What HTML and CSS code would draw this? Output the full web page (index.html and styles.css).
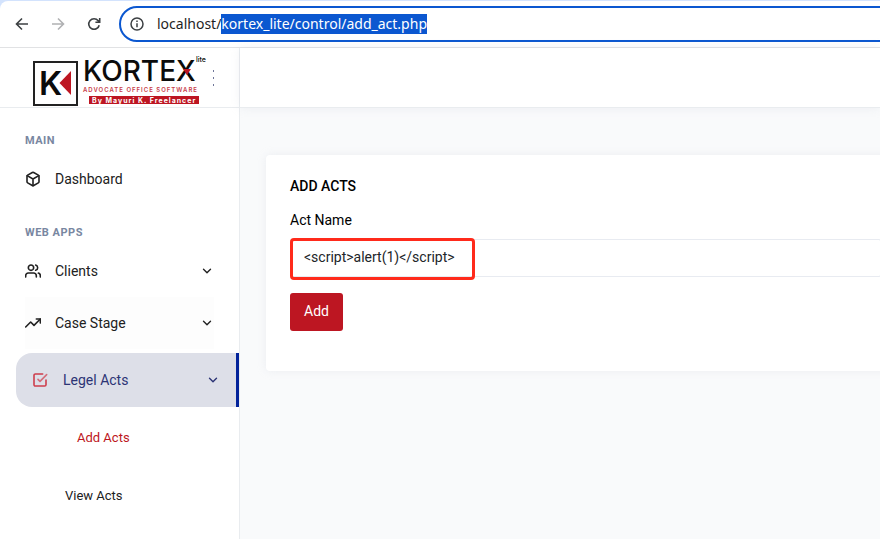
FILE: index.html
```html
<!DOCTYPE html>
<html lang="en">
<head>
<meta charset="utf-8">
<title>Kortex Lite - Add Acts</title>
<link rel="stylesheet" href="styles.css">
</head>
<body>
<div class="browser">
  <button class="tool" type="button" aria-label="Back">
    <svg width="16" height="16" viewBox="0 0 16 16"><path d="M14 8H3M8 2.500 2.500 8 8 13.500"/></svg>
  </button>
  <button class="tool tool-off" type="button" aria-label="Forward" disabled>
    <svg width="16" height="16" viewBox="0 0 16 16"><path d="M2 8h11M8 2.500 13.500 8 8 13.500"/></svg>
  </button>
  <button class="tool" type="button" aria-label="Reload">
    <svg width="16" height="16" viewBox="0 0 16 16"><path d="M13.200 9.200A5.300 5.300 0 1 1 12.200 4.700L13.600 6M13.700 2v4.300H9.400"/></svg>
  </button>
  <div class="address">
    <svg class="info" width="16" height="16" viewBox="0 0 16 16" aria-hidden="true"><circle cx="8" cy="8" r="6"/><path d="M8 7.200v4M8 4.500v1.500"/></svg>
    <input id="url" type="text" aria-label="Address" value="localhost/kortex_lite/control/add_act.php" spellcheck="false">
  </div>
</div>
<div class="app">
  <aside class="sidebar">
    <div class="brand">
      <a class="logo" href="#" aria-label="Kortex Lite">
        <svg width="176" height="52" viewBox="0 0 176 52">
          <rect class="logo-frame" x="1" y="7" width="43" height="43"/>
          <text class="logo-k" x="6" y="40">K</text>
          <path class="logo-red" d="M38 16v24L26.500 28z"/>
          <text class="logo-name" x="50" y="26">KORTEX</text>
          <path class="logo-red" d="M150 14h8l-4 6z"/>
          <text class="logo-lite" x="163" y="7">lite</text>
          <text class="logo-tag" x="50" y="37">ADVOCATE OFFICE SOFTWARE</text>
          <rect class="logo-red" x="56" y="41" width="110" height="8"/>
          <text class="logo-by" x="59" y="48">By Mayuri K. Freelancer</text>
        </svg>
      </a>
      <button class="toggler" type="button" aria-label="Toggle sidebar"><span></span><span></span><span></span></button>
    </div>
    <nav class="menu">
      <h2>Main</h2>
      <a class="item" href="#">
        <svg width="16" height="16" viewBox="0 0 24 24"><path d="M21 16V8a2 2 0 0 0-1-1.730l-7-4a2 2 0 0 0-2 0l-7 4A2 2 0 0 0 3 8v8a2 2 0 0 0 1 1.730l7 4a2 2 0 0 0 2 0l7-4A2 2 0 0 0 21 16z"/><path d="M3.270 6.960 12 12.010l8.730-5.050M12 22.080V12"/></svg>
        <span>Dashboard</span>
      </a>
      <h2>Web Apps</h2>
      <a class="item" href="#">
        <svg width="16" height="16" viewBox="0 0 24 24"><path d="M17 21v-2a4 4 0 0 0-4-4H5a4 4 0 0 0-4 4v2"/><circle cx="9" cy="7" r="4"/><path d="M23 21v-2a4 4 0 0 0-3-3.870M16 3.130a4 4 0 0 1 0 7.750"/></svg>
        <span>Clients</span>
        <svg class="arrow" width="14" height="14" viewBox="0 0 24 24"><path d="m6 9 6 6 6-6"/></svg>
      </a>
      <a class="item item-shaded" href="#">
        <svg width="16" height="16" viewBox="0 0 24 24"><path d="M23 6l-9.500 9.500-5-5L1 18"/><path d="M17 6h6v6"/></svg>
        <span>Case Stage</span>
        <svg class="arrow" width="14" height="14" viewBox="0 0 24 24"><path d="m6 9 6 6 6-6"/></svg>
      </a>
      <a class="item item-open" href="#">
        <svg class="check" width="16" height="16" viewBox="0 0 24 24"><path class="tick" d="m9 11 3 3L22 4"/><path d="M21 12v7a2 2 0 0 1-2 2H5a2 2 0 0 1-2-2V5a2 2 0 0 1 2-2h11"/></svg>
        <span>Legel Acts</span>
        <svg class="arrow" width="14" height="14" viewBox="0 0 24 24"><path d="m6 9 6 6 6-6"/></svg>
      </a>
      <div class="submenu">
        <a class="current" href="#">Add Acts</a>
        <a href="#">View Acts</a>
      </div>
    </nav>
  </aside>
  <div class="page">
    <header class="navbar"></header>
    <main>
      <form class="card">
        <h1>Add Acts</h1>
        <label for="act">Act Name</label>
        <div class="field">
          <input id="act" type="text" value="&lt;script&gt;alert(1)&lt;/script&gt;" spellcheck="false">
          <div class="highlight"></div>
        </div>
        <button class="add" type="button">Add</button>
      </form>
    </main>
  </div>
</div>
<script src="script.js"></script>
</body>
</html>
```
FILE: styles.css
```css
* { box-sizing: border-box; }
html { background: #d3e3fd; }
body {
  margin: 0;
  min-height: 100vh;
  display: flex;
  flex-direction: column;
  overflow: hidden;
  color: #000;
  font: 14px/20px Roboto, sans-serif;
}
a { color: inherit; text-decoration: none; }
button, input { font: inherit; }
svg { flex: none; fill: none; stroke: currentColor; stroke-width: 2; stroke-linecap: round; stroke-linejoin: round; }

.browser {
  display: flex;
  align-items: center;
  height: 47px;
  margin-top: 1px;
  padding-left: 14px;
  gap: 20px;
  background: #fff;
  border-bottom: 1px solid #e1e2e4;
  border-top-left-radius: 8px;
}
.tool { display: flex; padding: 0; border: 0; background: none; color: #3c4043; }
.tool svg { stroke-width: 1.600; stroke-linecap: butt; stroke-linejoin: miter; }
.tool-off { color: #b0b1b3; }
.address {
  display: flex;
  align-items: center;
  gap: 12px;
  flex: 1;
  height: 36px;
  margin: 0 -24px 0 -3px;
  padding-left: 8px;
  border: 2px solid #0b57d0;
  border-radius: 18px;
}
.info { color: #3c4043; stroke-width: 1.500; stroke-linecap: butt; }
.address input {
  flex: 1;
  height: 20px;
  padding: 0;
  border: 0;
  outline: 0;
  background: none;
  color: #1f1f1f;
  font: 14px/20px "Noto Sans", sans-serif;
}
.address input::selection { background: #0b57d0; color: #fff; }

.app { display: flex; flex: 1; background: #f9fafb; }
.sidebar { width: 240px; flex: none; background: #fff; border-right: 1px solid #e9ecef; }
.brand {
  display: flex;
  align-items: center;
  height: 60px;
  padding-left: 33px;
  border-bottom: 1px solid #e9ecef;
}
.logo { display: flex; margin-top: 7px; }
.logo svg { stroke: none; }
.logo .logo-frame { stroke: #222; stroke-width: 2; stroke-linejoin: miter; }
.logo text { font-family: Inter, sans-serif; fill: #0b0b0b; }
.logo .logo-k { font-size: 33px; font-weight: 600; }
.logo .logo-red { fill: #bd1622; }
.logo .logo-name { font-size: 28px; font-weight: 500; }
.logo .logo-lite { font-size: 7px; font-weight: 500; }
.logo .logo-tag { font-size: 6px; font-weight: 600; fill: #c8404a; letter-spacing: 1px; }
.logo .logo-by { font-size: 7px; font-weight: 700; fill: #fff; letter-spacing: 1px; }
.toggler { display: flex; flex-direction: column; gap: 5px; padding: 0; border: 0; background: none; margin-left: 4px; }
.toggler span { width: 1px; height: 2px; background: #6f7699; }

.menu { padding: 23px 0 0 16px; }
.menu h2 {
  margin: 0;
  padding-left: 9px;
  color: #7987a1;
  font-size: 11px;
  font-weight: 700;
  line-height: 20px;
  letter-spacing: 0.500px;
  text-transform: uppercase;
}
.item + h2 { margin-top: 18px; }
.item {
  display: flex;
  align-items: center;
  gap: 14px;
  height: 52px;
  margin: 0 25px 0 9px;
}
h2 + .item { margin-top: 2px; }
.item span { flex: 1; }
.item svg { stroke-width: 2.400; }
.item, .submenu a { font-weight: 400; color: #212121; }
.item-shaded { background: #fdfdfd; }
.item-open {
  height: 54px;
  margin: 4px 0 0;
  padding: 0 16px;
  background: #dddfe8;
  border-right: 3px solid #02229a;
  border-radius: 16px 0 0 16px;
  color: #2c3475;
}
.item-open .check { color: #ce3d4b; }
.item-open span { margin-left: 1px; }
.tick { opacity: 0.700; }
.submenu { display: flex; flex-direction: column; padding: 2px 0 0 49px; font-size: 13px; }
.submenu a { line-height: 58px; }
.submenu .current { padding-left: 12px; color: #bd1622; }

.page { flex: 1; min-width: 0; }
.navbar { height: 60px; background: #fff; border-bottom: 1px solid #e9ecef; box-shadow: 0 0 10px #b7c0ce33; }
main { padding: 47px 0 24px 26px; }
.card {
  margin-right: -26px;
  padding: 21px 25px 40px 24px;
  background: #fff;
  border-radius: 4px;
  box-shadow: 0 0 10px #b7c0ce33;
}
.card h1 { margin: 0 0 14px; font-size: 14px; font-weight: 500; line-height: 20px; text-transform: uppercase; }
.card label { display: block; margin-bottom: 9px; }
.field { position: relative; margin-bottom: 16px; }
.field input {
  display: block;
  width: 100%;
  height: 38px;
  padding: 0 13px 2px;
  border: 1px solid #e8ebf1;
  border-radius: 2px;
  background: #fff;
  color: #212529;
}
.highlight {
  position: absolute;
  top: -1px;
  left: 0;
  width: 185px;
  height: 42px;
  border: 3px solid #ff2a1b;
  border-radius: 4px;
  pointer-events: none;
}
.add {
  height: 38px;
  padding: 0 14px 2px;
  border: 0;
  border-radius: 3px;
  background: #bd1622;
  color: #fff;
}
```
FILE: script.js
```js
const url = document.getElementById("url");
url.focus();
url.setSelectionRange(url.value.indexOf("/") + 1, url.value.length);
```
